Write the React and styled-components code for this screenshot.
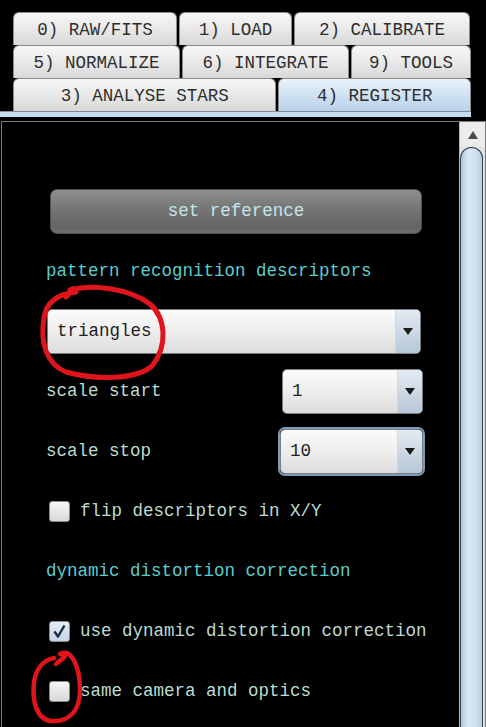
import React from 'react';
import styled, { createGlobalStyle } from 'styled-components';

const Global = createGlobalStyle`
  html, body {
    margin: 0;
    padding: 0;
    background: #000;
  }
`;

const Page = styled.div`
  position: relative;
  width: 486px;
  height: 727px;
  overflow: hidden;
  background: #000;
  font-family: "Liberation Mono", "DejaVu Sans Mono", monospace;
  font-size: 17.5px;
`;

const TabArea = styled.div`
  padding: 12px 0 0 13px;
  width: 458px;
`;

const TabRow = styled.div`
  display: flex;
  gap: 2px;
  height: 33px;
`;

const Tab = styled.div`
  box-sizing: border-box;
  width: ${p => p.$w}px;
  height: 33px;
  padding-top: 2px;
  display: flex;
  align-items: center;
  justify-content: center;
  border: 1px solid #8c8c8c;
  border-bottom: none;
  border-radius: 6px 6px 0 0;
  color: #2e2e2e;
  white-space: pre;
  background: ${p => p.$active
    ? 'linear-gradient(#eaf2fa, #d2e3f3 45%, #b9d2e9)'
    : 'linear-gradient(#f7f7f7, #e9e9e9 50%, #d8d8d8)'};
`;

const TabBase = styled.div`
  width: 471px;
  height: 5px;
  border-top: 1px solid #7f8c98;
  background: #c8dcef;
`;

const Panel = styled.div`
  box-sizing: border-box;
  display: flex;
  width: 485px;
  height: 620px;
  margin: 4px 0 0 1px;
  border: 1px solid #7a7a7a;
`;

const Content = styled.div`
  flex: 1;
  display: flex;
  flex-direction: column;
  padding: 59px 0 0 44px;
`;

const Row = styled.div`
  display: flex;
  align-items: center;
  justify-content: ${p => (p.$split ? 'space-between' : 'flex-start')};
  width: 377px;
  height: 60px;
  gap: 10px;
  white-space: nowrap;
`;

const Button = styled.div`
  box-sizing: border-box;
  width: 372px;
  height: 45px;
  margin-left: 4px;
  display: flex;
  align-items: center;
  justify-content: center;
  border: 1px solid #505050;
  border-radius: 7px;
  color: #c4e4e8;
  background: linear-gradient(#8e8e8e, #777 40%, #646464 85%, #6e6e6e);
`;

const Header = styled.span`
  color: #5ccccc;
`;

const Label = styled.span`
  color: #bcdcd2;
`;

const Combo = styled.div`
  box-sizing: border-box;
  display: flex;
  width: ${p => p.$w}px;
  height: 45px;
  margin-left: ${p => p.$ml || 0}px;
  border: 1px solid #7e7e7e;
  border-radius: 5px;
  overflow: hidden;
  box-shadow: ${p => (p.$focus ? '0 0 0 2px #7c9cbc' : 'none')};
  background: linear-gradient(#fbfbfb, #eeeeee 50%, #dcdcdc);
`;

const ComboText = styled.div`
  flex: 1;
  display: flex;
  align-items: center;
  padding-left: 9px;
  color: #1e1e1e;
`;

const ComboArrow = styled.div`
  width: 24px;
  display: flex;
  align-items: center;
  justify-content: center;
  border-left: 1px solid #d0d8e0;
  background: linear-gradient(#e4ebf2, #cdd9e5 50%, #b7c7d7);

  &::after {
    content: '';
    border-left: 5px solid transparent;
    border-right: 5px solid transparent;
    border-top: 7px solid #1a1a1a;
  }
`;

const Box = styled.div`
  box-sizing: border-box;
  flex: none;
  width: 21px;
  height: 21px;
  margin-left: 3px;
  border: 1px solid #8a8a8a;
  border-radius: 3px;
  display: flex;
  align-items: center;
  justify-content: center;
  background: ${p => p.$checked
    ? 'linear-gradient(#e4edf6, #c3d5e7)'
    : 'linear-gradient(#f6f6f6, #d8d8d8)'};
`;

const Scrollbar = styled.div`
  width: 25px;
  display: flex;
  flex-direction: column;
  background: #e2e2e2;
  border-left: 1px solid #b8b8b8;
`;

const UpButton = styled.div`
  height: 25px;
  display: flex;
  align-items: center;
  justify-content: center;
  background: #ececec;

  &::after {
    content: '';
    border-left: 5px solid transparent;
    border-right: 5px solid transparent;
    border-bottom: 8px solid #4a4a4a;
  }
`;

const Thumb = styled.div`
  flex: 1;
  margin-right: 2px;
  border: 1px solid #34414e;
  border-bottom: none;
  border-radius: 14px 14px 0 0;
  background: linear-gradient(90deg, #aec4da, #d9e7f5 35%, #d2e2f2 65%, #b9cfe5);
`;

const Marks = styled.svg`
  position: absolute;
  left: 0;
  top: 0;
  pointer-events: none;
`;

const Check = () => (
  <svg width="15" height="15" viewBox="0 0 15 15">
    <path d="M2.5 7.5 L6 12.5 L12.5 1.5" fill="none" stroke="#1b2a44" strokeWidth="2.4" strokeLinejoin="round" />
  </svg>
);

const CheckRow = ({ checked, children }) => (
  <Row>
    <Box $checked={checked}>{checked && <Check />}</Box>
    <Label>{children}</Label>
  </Row>
);

const Select = ({ w, ml, focus, value }) => (
  <Combo $w={w} $ml={ml} $focus={focus}>
    <ComboText>{value}</ComboText>
    <ComboArrow />
  </Combo>
);

export default function App() {
  return (
    <Page>
      <Global />
      <TabArea>
        <TabRow>
          <Tab $w={164}>0) RAW/FITS</Tab>
          <Tab $w={113}>1) LOAD</Tab>
          <Tab $w={176}>2) CALIBRATE</Tab>
        </TabRow>
        <TabRow>
          <Tab $w={167}>5) NORMALIZE</Tab>
          <Tab $w={167}>6) INTEGRATE</Tab>
          <Tab $w={120}>9) TOOLS</Tab>
        </TabRow>
        <TabRow>
          <Tab $w={264}>3) ANALYSE STARS</Tab>
          <Tab $w={193} $active>4) REGISTER</Tab>
        </TabRow>
      </TabArea>
      <TabBase />
      <Panel>
        <Content>
          <Row>
            <Button>set reference</Button>
          </Row>
          <Row>
            <Header>pattern recognition descriptors</Header>
          </Row>
          <Row>
            <Select w={374} ml={1} value="triangles" />
          </Row>
          <Row $split>
            <Label>scale start</Label>
            <Select w={141} value="1" />
          </Row>
          <Row $split>
            <Label>scale stop</Label>
            <Select w={143} focus value="10" />
          </Row>
          <CheckRow>flip descriptors in X/Y</CheckRow>
          <Row>
            <Header>dynamic distortion correction</Header>
          </Row>
          <CheckRow checked>use dynamic distortion correction</CheckRow>
          <CheckRow>same camera and optics</CheckRow>
        </Content>
        <Scrollbar>
          <UpButton />
          <Thumb />
        </Scrollbar>
      </Panel>
      <Marks width="486" height="727" viewBox="0 0 486 727">
        <path
          d="M66 297 C 74 289, 76 287, 70 290 C 92 284, 128 288, 150 304 C 166 318, 168 346, 152 366 C 136 380, 96 380, 66 372 C 46 364, 40 342, 44 318 C 46 302, 58 294, 76 292"
          fill="none" stroke="#e0141b" strokeWidth="5" strokeLinecap="round" strokeLinejoin="round"
        />
        <path
          d="M56 664 C 62 658, 70 656, 60 654 C 72 648, 80 668, 80 690 C 80 710, 70 722, 52 721 C 36 720, 32 700, 34 682 C 36 668, 44 660, 54 658"
          fill="none" stroke="#e0141b" strokeWidth="4.5" strokeLinecap="round" strokeLinejoin="round"
        />
      </Marks>
    </Page>
  );
}
